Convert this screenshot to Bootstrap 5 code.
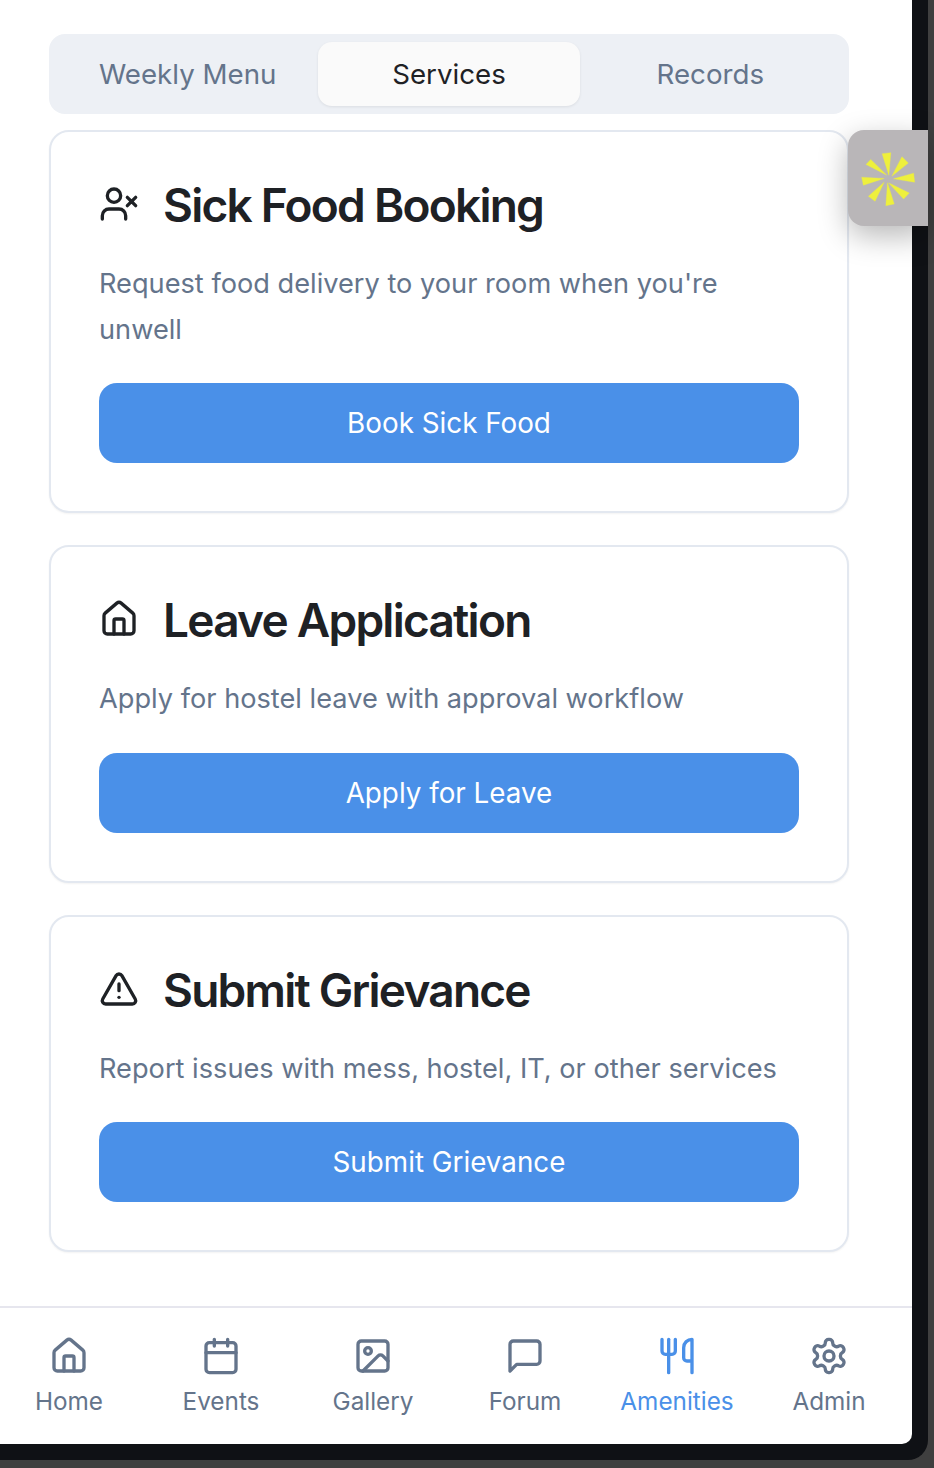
<!DOCTYPE html>
<html lang="en">
<head>
    <meta charset="UTF-8">
    <meta name="viewport" content="width=device-width, initial-scale=1.0">
    <title>Amenities</title>
    <link rel="stylesheet" href="https://cdn.jsdelivr.net/npm/bootstrap@5.3.0/dist/css/bootstrap.min.css">
    <style>
        html, body {
            height: 100%;
        }
        body {
            background-color: #3f3f3f;
            font-family: Inter, "Liberation Sans", sans-serif;
            overflow: hidden;
        }
        .device-frame {
            width: 928px;
            height: 1460px;
            padding: 0 16px 16px 0;
            background: #0f1115;
            border-bottom-right-radius: 20px;
        }
        .app-panel {
            height: 100%;
            background: #fff;
            border-bottom-right-radius: 10px;
        }
        .app-main {
            padding: 34px 63px 0 49px;
        }
        .tab-strip {
            height: 80px;
            padding: 8px;
            background: #edf0f5;
            border-radius: 16px;
            margin-bottom: 16px;
        }
        .tab-strip .nav-link {
            flex: 1 1 0;
            height: 64px;
            padding: 2px 0 0;
            font-size: 27.7px;
            font-weight: 400;
            color: #64748b;
            border-radius: 14px;
        }
        .tab-strip .nav-link.active {
            background: #fafafa;
            color: #1e2125;
            box-shadow: 0 1px 3px rgba(0, 0, 0, 0.08);
        }
        .service-card {
            border: 2px solid #e3e8f0;
            border-radius: 20px;
            margin-bottom: 32px;
            box-shadow: 0 1px 2px rgba(0, 0, 0, 0.05);
            --bs-card-bg: #fff;
        }
        .service-card .card-body {
            padding: 48px;
        }
        .service-title {
            height: 52px;
            margin: 0 0 29px;
            gap: 24px;
            font-size: 46px;
            font-weight: 600;
            letter-spacing: -1.75px;
            color: #1e2125;
        }
        .service-title svg {
            flex: none;
            width: 40px;
            height: 40px;
            margin-bottom: 4px;
            stroke-width: 2;
        }
        .service-text {
            margin: 0 0 31px;
            font-size: 27.2px;
            line-height: 45.5px;
            color: #64748b;
        }
        .service-btn {
            height: 80px;
            padding-top: 8px;
            font-size: 27.8px;
            font-weight: 400;
            border: 0;
            border-radius: 18px;
            --bs-btn-bg: #4a90e8;
            --bs-btn-hover-bg: #4a90e8;
        }
        .bottom-bar {
            height: 138px;
            padding: 0 14px 0 0;
            gap: 14px;
            border-top: 2px solid #e6e6ee;
        }
        .bottom-item {
            flex: 1 1 0;
            padding-top: 28px;
            font-size: 24.3px;
            font-weight: 400;
            line-height: 36px;
            color: #64748b;
            text-decoration: none;
        }
        .bottom-item svg {
            width: 40px;
            height: 40px;
            margin-bottom: 7px;
            stroke-width: 2;
        }
        .bottom-item.current {
            color: #4a90e8;
        }
        .float-tab {
            position: absolute;
            left: 848px;
            top: 130px;
            width: 80px;
            height: 96px;
            background: #b9b6b8;
            border-radius: 16px 0 0 16px;
            box-shadow: 0 10px 30px rgba(0, 0, 0, 0.28);
        }
    </style>
</head>
<body>
    <div class="device-frame">
        <div class="app-panel d-flex flex-column">
            <main class="app-main flex-grow-1">
                <nav class="nav tab-strip">
                    <a class="nav-link d-flex align-items-center justify-content-center" href="#">Weekly Menu</a>
                    <a class="nav-link active d-flex align-items-center justify-content-center" href="#">Services</a>
                    <a class="nav-link d-flex align-items-center justify-content-center" href="#">Records</a>
                </nav>

                <div class="card service-card">
                    <div class="card-body">
                        <h2 class="service-title d-flex align-items-center">
                            <svg viewBox="0 0 24 24" fill="none" stroke="currentColor" stroke-linecap="round" stroke-linejoin="round"><path d="M16 21v-2a4 4 0 0 0-4-4H6a4 4 0 0 0-4 4v2"/><circle cx="9" cy="7" r="4"/><path d="m17 8 5 5M22 8l-5 5"/></svg>
                            Sick Food Booking
                        </h2>
                        <p class="service-text">Request food delivery to your room when you're unwell</p>
                        <button type="button" class="btn btn-primary service-btn w-100">Book Sick Food</button>
                    </div>
                </div>

                <div class="card service-card">
                    <div class="card-body">
                        <h2 class="service-title d-flex align-items-center">
                            <svg viewBox="0 0 24 24" fill="none" stroke="currentColor" stroke-linecap="round" stroke-linejoin="round"><path d="M15 21v-8a1 1 0 0 0-1-1h-4a1 1 0 0 0-1 1v8"/><path d="M3 10a2 2 0 0 1 .709-1.528l7-5.999a2 2 0 0 1 2.582 0l7 5.999A2 2 0 0 1 21 10v9a2 2 0 0 1-2 2H5a2 2 0 0 1-2-2z"/></svg>
                            Leave Application
                        </h2>
                        <p class="service-text">Apply for hostel leave with approval workflow</p>
                        <button type="button" class="btn btn-primary service-btn w-100">Apply for Leave</button>
                    </div>
                </div>

                <div class="card service-card">
                    <div class="card-body">
                        <h2 class="service-title d-flex align-items-center">
                            <svg viewBox="0 0 24 24" fill="none" stroke="currentColor" stroke-linecap="round" stroke-linejoin="round"><path d="m21.73 18-8-14a2 2 0 0 0-3.48 0l-8 14A2 2 0 0 0 4 21h16a2 2 0 0 0 1.73-3"/><path d="M12 9v4"/><path d="M12 17h.01"/></svg>
                            Submit Grievance
                        </h2>
                        <p class="service-text">Report issues with mess, hostel, IT, or other services</p>
                        <button type="button" class="btn btn-primary service-btn w-100">Submit Grievance</button>
                    </div>
                </div>
            </main>

            <nav class="bottom-bar d-flex">
                <a class="bottom-item d-flex flex-column align-items-center" href="#">
                    <svg viewBox="0 0 24 24" fill="none" stroke="currentColor" stroke-linecap="round" stroke-linejoin="round"><path d="M15 21v-8a1 1 0 0 0-1-1h-4a1 1 0 0 0-1 1v8"/><path d="M3 10a2 2 0 0 1 .709-1.528l7-5.999a2 2 0 0 1 2.582 0l7 5.999A2 2 0 0 1 21 10v9a2 2 0 0 1-2 2H5a2 2 0 0 1-2-2z"/></svg>
                    Home
                </a>
                <a class="bottom-item d-flex flex-column align-items-center" href="#">
                    <svg viewBox="0 0 24 24" fill="none" stroke="currentColor" stroke-linecap="round" stroke-linejoin="round"><path d="M8 2v4M16 2v4"/><rect x="3" y="4" width="18" height="18" rx="2"/><path d="M3 10h18"/></svg>
                    Events
                </a>
                <a class="bottom-item d-flex flex-column align-items-center" href="#">
                    <svg viewBox="0 0 24 24" fill="none" stroke="currentColor" stroke-linecap="round" stroke-linejoin="round"><rect x="3" y="3" width="18" height="18" rx="2"/><circle cx="9" cy="9" r="2"/><path d="m21 15-3.086-3.086a2 2 0 0 0-2.828 0L6 21"/></svg>
                    Gallery
                </a>
                <a class="bottom-item d-flex flex-column align-items-center" href="#">
                    <svg viewBox="0 0 24 24" fill="none" stroke="currentColor" stroke-linecap="round" stroke-linejoin="round"><path d="M21 15a2 2 0 0 1-2 2H7l-4 4V5a2 2 0 0 1 2-2h14a2 2 0 0 1 2 2z"/></svg>
                    Forum
                </a>
                <a class="bottom-item current d-flex flex-column align-items-center" href="#">
                    <svg viewBox="0 0 24 24" fill="none" stroke="currentColor" stroke-linecap="round" stroke-linejoin="round"><path d="M3 2v7c0 1.1.9 2 2 2h4a2 2 0 0 0 2-2V2"/><path d="M7 2v20"/><path d="M21 15V2a5 5 0 0 0-5 5v6c0 1.1.9 2 2 2h3Zm0 0v7"/></svg>
                    Amenities
                </a>
                <a class="bottom-item d-flex flex-column align-items-center" href="#">
                    <svg viewBox="0 0 24 24" fill="none" stroke="currentColor" stroke-linecap="round" stroke-linejoin="round"><path d="M12.22 2h-.44a2 2 0 0 0-2 2v.18a2 2 0 0 1-1 1.73l-.43.25a2 2 0 0 1-2 0l-.15-.08a2 2 0 0 0-2.73.73l-.22.38a2 2 0 0 0 .73 2.73l.15.1a2 2 0 0 1 1 1.72v.51a2 2 0 0 1-1 1.74l-.15.09a2 2 0 0 0-.73 2.73l.22.38a2 2 0 0 0 2.73.73l.15-.08a2 2 0 0 1 2 0l.43.25a2 2 0 0 1 1 1.73V20a2 2 0 0 0 2 2h.44a2 2 0 0 0 2-2v-.18a2 2 0 0 1 1-1.73l.43-.25a2 2 0 0 1 2 0l.15.08a2 2 0 0 0 2.73-.73l.22-.39a2 2 0 0 0-.73-2.73l-.15-.08a2 2 0 0 1-1-1.74v-.5a2 2 0 0 1 1-1.74l.15-.09a2 2 0 0 0 .73-2.73l-.22-.38a2 2 0 0 0-2.73-.73l-.15.08a2 2 0 0 1-2 0l-.43-.25a2 2 0 0 1-1-1.73V4a2 2 0 0 0-2-2z"/><circle cx="12" cy="12" r="3"/></svg>
                    Admin
                </a>
            </nav>
        </div>
    </div>

    <div class="float-tab d-flex align-items-center justify-content-center">
        <svg width="57" height="57" viewBox="240 147 170 170" fill="#eef03c" stroke="#eef03c" stroke-width="1">
            <polygon points="306,158 332,155 326,222"/>
            <polygon points="365,167 384,186 335,225"/>
            <polygon points="400,216 403,243 340,233"/>
            <polygon points="387,275 370,293 325,245"/>
            <polygon points="342,308 317,313 322,245"/>
            <polygon points="265,285 285,300 312,243"/>
            <polygon points="245,228 250,252 312,232"/>
            <polygon points="258,190 272,175 320,222"/>
        </svg>
    </div>

    <script src="https://cdn.jsdelivr.net/npm/bootstrap@5.3.0/dist/js/bootstrap.bundle.min.js"></script>
</body>
</html>
